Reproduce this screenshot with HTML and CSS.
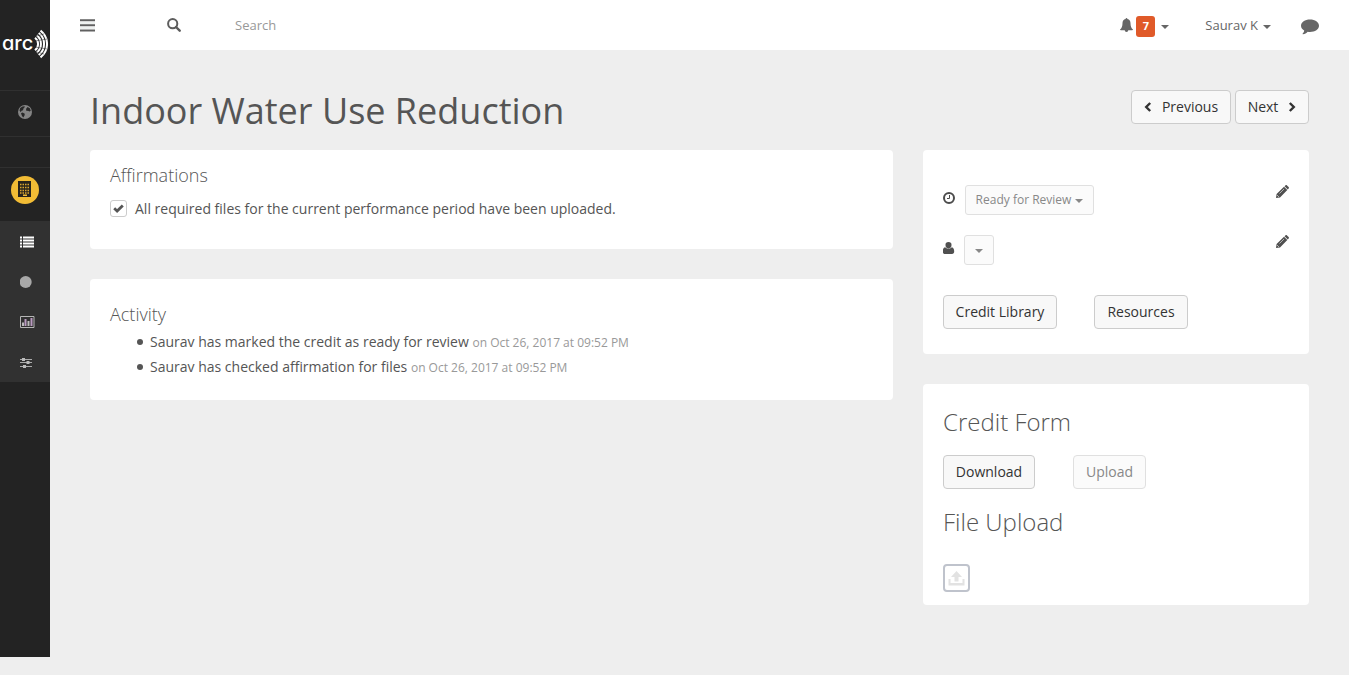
FILE: index.html
```html
<!DOCTYPE html>
<html lang="en">
<head>
<meta charset="utf-8">
<title>Indoor Water Use Reduction</title>
<link rel="stylesheet" href="styles.css">
</head>
<body>
<div class="app">
  <nav class="sidebar">
    <div class="logo">
      <span class="logo-text">arc</span>
      <svg class="logo-waves" width="18" height="30" viewBox="0 0 18 30" fill="none" stroke="#fff" stroke-width="2">
        <path d="M5 8.700a8 8 0 0 1 0 12.600M6.800 6.400a11 11 0 0 1 0 17.200M8.700 4a14 14 0 0 1 0 22M10.500 1.600a17 17 0 0 1 0 26.800"/>
        <path d="M3 8L14 5M3 22l11 3M5 12l12-2M5 18l12 2" stroke="#232323" stroke-width=".5"/>
      </svg>
    </div>
    <a class="side-item side-globe">
      <svg width="14" height="14" viewBox="0 0 14 14"><circle cx="7" cy="7" r="7" fill="#858585"/><path d="M2.200 3L4.500 1.500l2.300-.3-.3 1.300L5.600 3.300 5 5.300l-1.500.5-.7 1.400L1.500 5.500zM8 4l1.500-2 2.300 1.300 1 2.400-1.300.8-1.500-.7L8.500 6zM3 8.200l1.500-.7 2.300 1.300-.3 1.700L5.300 12.400 4 11z" fill="#282828"/></svg>
    </a>
    <div class="side-gap"></div>
    <a class="side-item side-building">
      <span class="building-badge"><svg width="13" height="16" viewBox="0 0 13 16"><path d="M0 0h13v16H0z" fill="#28241c"/><path d="M2 3.500h9M2 6.500h9M2 9.500h9M2 12h9" stroke="#d9a52f" stroke-width="1.300" stroke-dasharray="1.500 1"/><path d="M5 13.500h4V15H5z" fill="#f2bc35"/></svg></span>
    </a>
    <div class="side-menu">
      <a class="side-item"><svg width="14" height="12" viewBox="0 0 14 12"><path d="M0 1.500h2M3 1.500h11M0 4.500h2M3 4.500h11M0 7.500h2M3 7.500h11M0 10.500h2M3 10.500h11" stroke="#fff" stroke-width="2"/></svg></a>
      <a class="side-item"><svg width="12" height="12" viewBox="0 0 12 12"><circle cx="5.700" cy="6" r="6" fill="#a8a8a8"/></svg></a>
      <a class="side-item side-chart"><svg width="15" height="12" viewBox="0 0 15 12"><path d="M.5.500h13.500v11H.500z" fill="none" stroke="#b5b5b5"/><path d="M3 6.500V10" stroke="#bbb" stroke-width="2"/><path d="M5.500 3v7M11.500 2v8" stroke="#b99ac0" stroke-width="2"/><path d="M8.500 5v5" stroke="#bbb" stroke-width="2"/></svg></a>
      <a class="side-item"><svg width="12" height="10" viewBox="0 0 12 10"><path d="M0 1.500h12M0 4.500h12M0 8.500h12" stroke="#aaa"/><path d="M2 0h3v3H2zM6.500 3h3v3h-3zM3 7h3v3H3z" fill="#bbb"/></svg></a>
    </div>
  </nav>

  <div class="page">
    <header class="topbar">
      <svg class="menu-icon" width="15" height="13" viewBox="0 0 15 13"><path d="M0 1.200h15M0 6.200h15M0 11.500h15" stroke="#606060" stroke-width="2"/><path d="M0 4h15M0 9h15" stroke="#dde3e1" stroke-width="1"/></svg>
      <svg class="search-icon" width="14" height="14" viewBox="0 0 14 14" fill="none" stroke="#5d5d5d" stroke-width="2"><circle cx="5.700" cy="5.700" r="4.600"/><path d="M9 9l3.700 3.700" stroke-width="2.400" stroke-linecap="round"/></svg>
      <span class="search-label">Search</span>
      <div class="alerts">
        <svg width="13" height="14" viewBox="0 0 13 14"><path d="M6.500 0c.6 0 .9.400.9 1 2.200.5 3.100 2.200 3.100 4.200 0 3 .8 4.900 2.500 6.300 0 .5-.4.800-.9.800H8.200c0 1-.7 1.700-1.700 1.700s-1.700-.7-1.700-1.700H.9c-.5 0-.9-.3-.9-.8C1.700 10.100 2.500 8.200 2.500 5.200 2.500 3.200 3.400 1.500 5.600 1c0-.6.3-1 .9-1z" fill="#666"/></svg>
        <span class="count">7</span>
        <i class="caret"></i>
      </div>
      <div class="user">Saurav K<i class="caret"></i></div>
      <svg class="comment-icon" width="18" height="16" viewBox="0 0 18 16"><path d="M9 .5c5 0 9 2.700 9 6.200s-4 6.200-9 6.200c-.8 0-1.500-.1-2.300-.2-1.300 1.300-2.900 2.200-4.700 2.500-.5.100-.6-.4-.3-.7.900-.9 1.300-1.700 1.500-3C1.300 10.400 0 8.700 0 6.700 0 3.200 4 .5 9 .5z" fill="#666"/></svg>
    </header>

    <main class="content">
      <div class="title-row">
        <h1>Indoor Water Use Reduction</h1>
        <div class="pager">
          <button class="btn btn-prev"><svg width="8" height="10" viewBox="0 0 8 10"><path d="M6.200 1L2.200 5l4 4" fill="none" stroke="#333" stroke-width="2.400"/></svg>Previous</button>
          <button class="btn btn-next">Next<svg width="8" height="10" viewBox="0 0 8 10"><path d="M1.800 1l4 4-4 4" fill="none" stroke="#333" stroke-width="2.400"/></svg></button>
        </div>
      </div>

      <div class="columns">
        <div class="col-main">
          <section class="card affirmations">
            <h4>Affirmations</h4>
            <label class="check-row"><span class="checkbox"><svg width="11" height="9" viewBox="0 0 11 9"><path d="M1.200 4.300l2.900 2.700 5.700-5.500" fill="none" stroke="#555" stroke-width="2.800"/></svg></span>All required files for the current performance period have been uploaded.</label>
          </section>
          <section class="card activity">
            <h4>Activity</h4>
            <ul>
              <li>Saurav has marked the credit as ready for review <small>on Oct 26, 2017 at 09:52 PM</small></li>
              <li>Saurav has checked affirmation for files <small>on Oct 26, 2017 at 09:52 PM</small></li>
            </ul>
          </section>
        </div>

        <aside class="col-side">
          <section class="card status">
            <div class="status-row">
              <svg class="row-icon" width="12" height="12" viewBox="0 0 12 12" fill="none" stroke="#4c4c4c"><circle cx="6" cy="6" r="5" stroke-width="2"/><path d="M6.500 3v3.500H4" /></svg>
              <button class="btn-small">Ready for Review<i class="caret"></i></button>
              <svg class="pencil" width="13" height="13" viewBox="0 0 13 13"><path d="M0 13l.6-4L8 1.700l3.300 3.300L4 12.400zM8.500 1.200L9.400.4c.5-.5 1.100-.5 1.600 0L12.600 2c.5.500.5 1.100 0 1.600l-.8.900z" fill="#505050"/><path d="M1 10l2 2M3.500 8.500l4.500-4.500" stroke="#ddd" stroke-width=".7"/></svg>
            </div>
            <div class="status-row">
              <svg class="row-icon" width="12" height="12" viewBox="0 0 12 12"><path d="M5.500 0a3 3 0 0 1 3 3.200 3 3 0 0 1-6 0A3 3 0 0 1 5.500 0zM2.200 5.200c1 1.700 5.600 1.700 6.600 0 1.700.3 2.400 2 2.400 4.300 0 1.600-.8 2.500-2.200 2.500H2C.6 12-.2 11.100-.2 9.500c0-2.300.7-4 2.400-4.300z" fill="#505050"/></svg>
              <button class="btn-small btn-user"><i class="caret"></i></button>
              <svg class="pencil" width="13" height="13" viewBox="0 0 13 13"><path d="M0 13l.6-4L8 1.700l3.300 3.300L4 12.400zM8.500 1.200L9.400.4c.5-.5 1.100-.5 1.600 0L12.600 2c.5.500.5 1.100 0 1.600l-.8.900z" fill="#505050"/><path d="M1 10l2 2M3.500 8.500l4.500-4.500" stroke="#ddd" stroke-width=".7"/></svg>
            </div>
            <div class="links">
              <button class="btn btn-library">Credit Library</button>
              <button class="btn btn-resources">Resources</button>
            </div>
          </section>
          <section class="card forms">
            <h3>Credit Form</h3>
            <div class="form-actions">
              <button class="btn btn-download">Download</button>
              <button class="btn btn-upload">Upload</button>
            </div>
            <h3>File Upload</h3>
            <div class="upload-tile"><svg width="17" height="15" viewBox="0 0 17 15"><path d="M8.500 0l5.500 6h-3.500v4.500h-4V6H3zM.5 8h2v4h12V8h2v6.500H.500z" fill="#e2e2e2"/></svg></div>
          </section>
        </aside>
      </div>
    </main>
  </div>
</div>
</body>
</html>
```
FILE: styles.css
```css
* { box-sizing: border-box; }
body {
  margin: 0;
  background: #eee;
  color: #555;
  font: 14px/20px "Open Sans", sans-serif;
}
svg { display: block; flex: none; }
.app { display: flex; height: 675px; overflow: hidden; }

.sidebar { width: 50px; height: 657px; background: #232323; flex: none; }
.logo { height: 90px; padding: 29px 0 0 2px; display: flex; }
.logo-text {
  width: 29px;
  color: #fff;
  font: 500 20px/28px Inter, sans-serif;
  font-feature-settings: "cv11";
}
.logo-waves { margin-left: -1px; }
.side-item { display: flex; align-items: center; }
.side-globe { height: 46px; padding: 0 0 3px 18px; border-top: 1px solid #303030; }
.side-gap { height: 31px; border-top: 1px solid #303030; }
.side-building { height: 54px; padding: 0 0 9px 11px; border-top: 1px solid #303030; }
.building-badge {
  width: 28px;
  height: 28px;
  padding: 0 1px 2px 0;
  border-radius: 50%;
  background: #f2bc35;
  display: flex;
  align-items: center;
  justify-content: center;
}
.side-menu { height: 161px; background: #313131; padding-top: 1px; }
.side-menu .side-item { height: 40.300px; padding-left: 20px; }
.side-menu .side-chart { padding-bottom: 1px; }

.page { flex: 1; min-width: 0; }
.topbar {
  height: 50px;
  background: #fff;
  color: #666;
  font-size: 13px;
  display: flex;
  align-items: center;
  padding: 0 30px;
}
.search-icon { margin-left: 72px; }
.search-label { margin-left: 54px; color: #999; }
.alerts { display: flex; align-items: center; margin-left: auto; }
.count {
  width: 19px;
  height: 21px;
  margin: 2px 6px 0 3px;
  border-radius: 3px;
  background: #e05a29;
  color: #fff;
  font-size: 11px;
  font-weight: 700;
  line-height: 20px;
  text-align: center;
}
.caret {
  display: inline-block;
  border-top: 4px solid currentColor;
  border-left: 4px solid transparent;
  border-right: 4px solid transparent;
}
.alerts .caret, .user .caret { margin-top: 3px; }
.user { display: flex; align-items: center; margin-left: 36px; }
.user .caret { margin-left: 5px; }
.comment-icon { margin: 3px 0 0 30px; }

.content { padding: 40px 40px 0; }
.title-row { display: flex; justify-content: space-between; height: 60px; }
h1, h3, h4, ul { margin: 0; }
h1 { font-size: 36px; font-weight: 400; line-height: 42px; }
h3 { font-size: 24px; font-weight: 300; line-height: 36px; }
h4 { font-size: 18px; font-weight: 300; line-height: 24px; }
.pager { display: flex; gap: 4px; }
.btn {
  height: 34px;
  padding: 0;
  border: 1px solid #ccc;
  border-radius: 4px;
  background: #f8f8f8;
  color: #333;
  font: 14px/20px "Open Sans", sans-serif;
  display: flex;
  align-items: center;
  justify-content: center;
}
.btn-prev { width: 100px; gap: 10px; }
.btn-next { width: 74px; gap: 10px; }
.columns { display: flex; gap: 30px; }
.col-main { flex: 1; }
.col-side { width: 386px; }
.card { background: #fff; border-radius: 4px; padding: 0 20px; margin-bottom: 30px; }
.affirmations { height: 99px; padding-top: 13px; }
.check-row { display: flex; align-items: flex-start; margin-top: 12px; }
.checkbox {
  width: 17px;
  height: 17px;
  margin: 1px 8px 0 0;
  border: 1px solid #ccc;
  border-radius: 3px;
  display: flex;
  align-items: center;
  justify-content: center;
}
.activity { height: 121px; padding-top: 23px; }
.activity ul { padding-left: 27px; margin-top: 3px; list-style: none; }
.activity li { height: 25px; line-height: 25px; }
.activity li::before {
  content: "";
  display: inline-block;
  width: 6px;
  height: 6px;
  margin-right: 7px;
  border-radius: 50%;
  background: #555;
  vertical-align: 2px;
}
.activity small { font-size: 12px; line-height: 1; color: #999; }

.status { height: 204px; padding-top: 35px; }
.status-row { display: flex; height: 50px; align-items: flex-start; }
.row-icon { margin: 7px 10px 0 0; }
.btn-small {
  width: 129px;
  height: 30px;
  padding: 0;
  border: 1px solid #e0e0e0;
  border-radius: 3px;
  background: #fbfbfb;
  color: #888;
  font: 12px/18px "Open Sans", sans-serif;
  display: flex;
  align-items: center;
  justify-content: center;
}
.btn-small .caret { margin: 2px 0 0 4px; }
.btn-user { width: 30px; margin-left: -1px; }
.btn-user .caret { margin-left: 0; }
.pencil { margin-left: auto; }
.links { display: flex; gap: 37px; margin-top: 10px; }
.btn-library { width: 114px; }
.btn-resources { width: 94px; }
.forms { height: 221px; padding-top: 20px; margin-bottom: 0; }
.form-actions { display: flex; gap: 38px; margin: 15px 0; }
.btn-download { width: 92px; }
.btn-upload { width: 73px; border-color: #e0e0e0; background: #fbfbfb; color: #888; }
.upload-tile {
  width: 27px;
  height: 28px;
  margin-top: 24px;
  border: 2px solid #bfc3cc;
  border-radius: 4px;
  display: flex;
  align-items: center;
  justify-content: center;
}
```
